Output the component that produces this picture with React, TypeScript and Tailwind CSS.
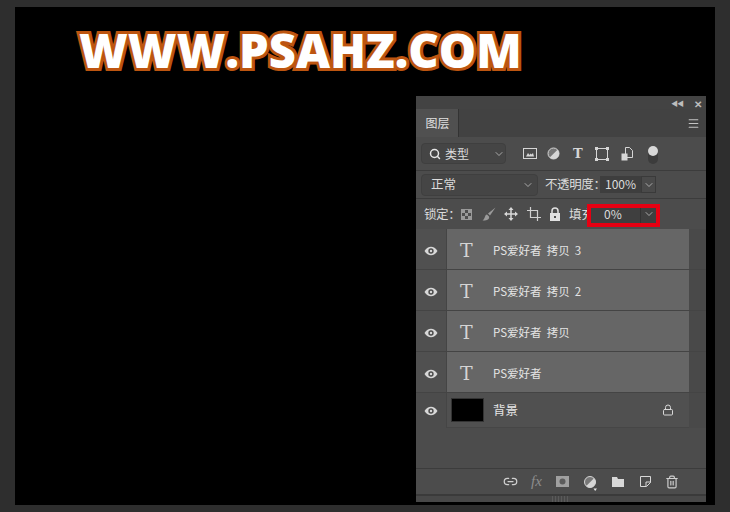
import React from "react";
import { Search, ChevronDown, Menu, Lock, Link2, Trash2 } from "lucide-react";

const cjk = "font-['Noto_Sans_CJK_SC','Noto_Sans',sans-serif]";

function Eye() {
  return (
    <svg width="14" height="10" viewBox="0 0 14 10">
      <path d="M0.5 5C2.5 2 4.5 .8 7 .8S11.500 2 13.500 5C11.500 8 9.500 9.200 7 9.200S2.500 8 .5 5Z" fill="#d8d8d8" />
      <circle cx="7" cy="5" r="2.700" fill="#4d4d4d" />
      <circle cx="7" cy="5" r="1.200" fill="#d8d8d8" />
    </svg>
  );
}

function TextLayer({ name }: { name: string }) {
  return (
    <div className="flex h-[41px] border-b border-[#444]">
      <div className="flex w-[31px] items-center justify-center border-r border-[#454545] bg-[#505050] pt-[3px]">
        <Eye />
      </div>
      <div className="flex w-[242px] items-center bg-[#666] pt-[3px]">
        <span className="ml-[13px] w-[33px] font-['DejaVu_Serif',serif] text-[19px] leading-none text-[#d4d4d4]">T</span>
        <span className="whitespace-pre text-[11.500px] text-[#e4e4e4]">{name}</span>
      </div>
      <div className="flex-1 bg-[#494949]" />
    </div>
  );
}

function Chevron() {
  return <ChevronDown className="h-3 w-3 text-[#c8c8c8]" strokeWidth={1.500} />;
}

export default function App() {
  return (
    <div className={`relative h-[512px] w-[730px] overflow-hidden bg-[#2e2e2e] px-[15px] py-[7px] ${cjk}`}>
      <div className="h-full bg-black pl-[64px] pt-[13px]">
        <h1 className="font-['Open_Sans',sans-serif] text-[47px] font-extrabold leading-[60px] text-white [-webkit-text-stroke:6px_#bd5510] [paint-order:stroke_fill]">
          WWW.PSAHZ.COM
        </h1>
      </div>

      {/* layers panel */}
      <div className="absolute left-[416px] top-[96px] flex h-[406px] w-[290px] flex-col bg-[#4c4c4c] text-[12px] text-[#dcdcdc]">
        <div className="flex h-[13px] items-center justify-end gap-[11px] bg-[#434343] pr-[4px] pt-[2px] text-[10px] leading-none text-[#bdbdbd]">
          <span className="text-[7px] tracking-[-1px]">◀◀</span>
          <span className="font-bold">✕</span>
        </div>

        <div className="flex h-[28px] bg-[#424242]">
          <div className="flex w-[43px] items-center justify-center border-r border-[#333] bg-[#505050] pl-[1px] text-[12px] text-[#e0e0e0]">图层</div>
          <div className="flex flex-1 items-center justify-end pr-[6px]">
            <Menu className="h-[13px] w-[13px] text-[#c4c4c4]" />
          </div>
        </div>

        <div className="flex h-[34px] items-center border-b border-[#3c3c3c] pl-[5px]">
          <div className="flex h-[21px] w-[85px] items-center rounded-sm border border-[#3f3f3f] bg-[#454545] pl-[7px]">
            <Search className="h-3 w-3 text-[#e6e6e6]" strokeWidth={3} />
            <span className="ml-[4px] flex-1 text-[12px]">类型</span>
            <Chevron />
          </div>
          <svg className="ml-[17px]" width="14" height="12" viewBox="0 0 14 12"><rect x=".5" y=".5" width="13" height="10" fill="none" stroke="#d6d6d6" /><path d="M3 8.500L5 5l1.500 2 1-1.500 1 1L10 5l1 3.500Z" fill="#d6d6d6" /></svg>
          <svg className="ml-[10px]" width="13" height="13" viewBox="0 0 13 13"><circle cx="6.500" cy="6.500" r="5.500" fill="#777" stroke="#d6d6d6" /><path d="M10.500 2.700A5.500 5.500 0 0 1 2.700 10.500Z" fill="#d6d6d6" /></svg>
          <span className="ml-[13px] w-[12px] font-['DejaVu_Serif',serif] text-[13px] font-bold leading-none text-[#d6d6d6]">T</span>
          <svg className="ml-[10px]" width="14" height="14" viewBox="0 0 14 14"><rect x="1.500" y="1.500" width="11" height="11" fill="none" stroke="#d6d6d6" /><path d="M0 0h3v3H0zM11 0h3v3h-3zM0 11h3v3H0zM11 11h3v3h-3z" fill="#d6d6d6" /></svg>
          <svg className="ml-[12px]" width="12" height="14" viewBox="0 0 12 14"><path d="M4.500.5h4l3 3v7h-7Z" fill="none" stroke="#d6d6d6" /><rect x=".5" y="6.500" width="6" height="7" fill="#d6d6d6" /></svg>
          <div className="relative ml-[15px] mt-[3px] h-[18px] w-[10px] rounded-full bg-[#3c3c3c]">
            <div className="absolute left-0 top-0 h-[10px] w-[10px] rounded-full bg-[#d8d8d8]" />
          </div>
        </div>

        <div className="flex h-[28px] items-center border-b border-[#3c3c3c] pl-[5px]">
          <div className="flex h-[22px] w-[117px] items-center rounded-sm border border-[#3f3f3f] bg-[#454545] pl-[9px] pr-[3px]">
            <span className="flex-1 text-[12.500px]">正常</span>
            <Chevron />
          </div>
          <span className="ml-[7px] w-[55px] whitespace-nowrap text-[12.500px] tracking-[-0.4px]">不透明度：</span>
          <div className="flex h-[17px] w-[41px] items-center justify-center bg-[#3e3e3e] pb-[1px] text-[12px]">100%</div>
          <div className="flex h-[17px] w-[15px] items-center justify-center border border-[#3a3a3a] bg-[#4a4a4a]">
            <Chevron />
          </div>
        </div>

        <div className="flex h-[30px] items-center pl-[8px]">
          <span className="w-[37px] whitespace-nowrap text-[12.500px] tracking-[-0.4px]">锁定：</span>
          <div className="grid h-[11px] w-[11px] grid-cols-3 grid-rows-3 border border-[#999]">
            <i className="bg-[#999]" /><i /><i className="bg-[#999]" />
            <i /><i className="bg-[#999]" /><i />
            <i className="bg-[#999]" /><i /><i className="bg-[#999]" />
          </div>
          <svg className="ml-[10px]" width="14" height="14" viewBox="0 0 14 14"><path d="M13.500.5L6 6.500 8 8.500ZM5 7.500C2.500 8 3.500 11.500 .5 13.500 4 14 8 12.500 7 9.500Z" fill="#9a9a9a" /></svg>
          <svg className="ml-[8px]" width="14" height="14" viewBox="0 0 14 14"><path d="M7 1v12M1 7h12" stroke="#d8d8d8" strokeWidth="1.500" /><path d="M7 0l2.500 3h-5zM7 14l2.500-3h-5zM0 7l3-2.500v5zM14 7l-3-2.500v5z" fill="#d8d8d8" /></svg>
          <svg className="ml-[9px]" width="14" height="14" viewBox="0 0 14 14"><path d="M0 3.500h10.500V14M3.500 0v10.500H14" fill="none" stroke="#d0d0d0" strokeWidth="1.200" /></svg>
          <svg className="ml-[8px]" width="12" height="14" viewBox="0 0 12 14"><path d="M3 6V4a3 3 0 0 1 6 0v2" fill="none" stroke="#e0e0e0" strokeWidth="1.500" /><rect x="1" y="6" width="10" height="8" fill="#e0e0e0" /><rect x="5" y="9" width="2" height="2" fill="#4c4c4c" /></svg>
          <span className="ml-[8px] whitespace-nowrap text-[12.500px]">填充</span>
          <div className="ml-[-7px] mt-[3px] flex h-[23px] w-[73px] items-center border-[4px] border-[#e60012] bg-[#3f3f3f]">
            <span className="flex-1 pb-[3px] pl-[13px] text-[12px] leading-none">0%</span>
            <div className="flex h-full w-[16px] items-center justify-center border-l border-[#333] pb-[3px]">
              <Chevron />
            </div>
          </div>
        </div>

        <div className="flex flex-col">
          <TextLayer name="PS爱好者  拷贝  3" />
          <TextLayer name="PS爱好者  拷贝  2" />
          <TextLayer name="PS爱好者  拷贝" />
          <TextLayer name="PS爱好者" />
          <div className="flex h-[35px]">
            <div className="flex w-[31px] items-center justify-center border-r border-[#454545] bg-[#4c4c4c]">
              <Eye />
            </div>
            <div className="flex w-[242px] items-center border-b border-[#464646] bg-[#505050] pl-[4px] pr-[15px]">
              <div className="h-[24px] w-[33px] border border-[#333] bg-black" />
              <span className="ml-[9px] flex-1 text-[12.500px] text-[#e6e6e6]">背景</span>
              <Lock className="h-3 w-3 text-[#d8d8d8]" />
            </div>
            <div className="flex-1 bg-[#494949]" />
          </div>
        </div>

        <div className="flex-1" />

        <div className="flex h-[26px] items-center justify-end border-t border-[#3c3c3c] pr-[27px]">
          <Link2 className="h-[15px] w-[15px] text-[#d0d0d0]" />
          <span className="ml-[13px] w-[12px] font-['Liberation_Serif',serif] text-[15px] italic leading-none text-[#8c8c8c]">fx</span>
          <svg className="ml-[13px]" width="13" height="11" viewBox="0 0 13 11"><rect width="13" height="11" fill="#a0a0a0" /><circle cx="6.500" cy="5.500" r="3" fill="#5c5c5c" /></svg>
          <svg className="ml-[15px] mt-[3px]" width="13" height="15" viewBox="0 0 13 15"><circle cx="6" cy="6" r="5.500" fill="#777" stroke="#d6d6d6" /><path d="M10 2.200A5.500 5.500 0 0 1 2.200 10Z" fill="#d6d6d6" /><path d="M9.500 12.500h3.500L11.200 15Z" fill="#e6e6e6" /></svg>
          <svg className="ml-[15px]" width="12" height="10" viewBox="0 0 12 10"><path d="M0 0h5l1 2h6v8H0Z" fill="#d8d8d8" /></svg>
          <svg className="ml-[16px]" width="11" height="11" viewBox="0 0 11 11"><path d="M.5.500h10v6l-4 4h-6Z" fill="none" stroke="#d8d8d8" /><path d="M6 10V6h5" fill="none" stroke="#d8d8d8" /></svg>
          <Trash2 className="ml-[14px] h-[14px] w-[14px] text-[#d0d0d0]" />
        </div>
        <div className="flex h-[8px] items-center justify-center border-t-2 border-[#3a3a3a] bg-[#484848]">
          <div className="h-[6px] w-[18px] bg-[repeating-linear-gradient(90deg,#5a5a5a_0,#5a5a5a_1px,transparent_1px,transparent_3px)]" />
        </div>
      </div>
    </div>
  );
}
